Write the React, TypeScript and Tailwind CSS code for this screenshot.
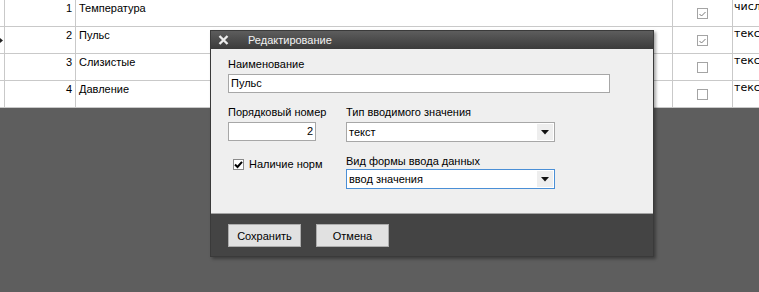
import React from "react";

type Row = {
  n: number;
  name: string;
  norm: boolean;
  type: string;
  current?: boolean;
};

const rows: Row[] = [
  { n: 1, name: "Температура", norm: true, type: "число" },
  { n: 2, name: "Пульс", norm: true, type: "текст", current: true },
  { n: 3, name: "Слизистые", norm: false, type: "текст" },
  { n: 4, name: "Давление", norm: false, type: "текст" },
];

function GridCheck({ checked }: { checked: boolean }) {
  return (
    <span className="flex h-[11px] w-[11px] items-center justify-center border border-[#a4a4a4] bg-white">
      {checked && (
        <svg width="9" height="9" viewBox="0 0 9 9">
          <path d="M1.5 5 L3.5 7 L7.5 3" fill="none" stroke="#7a7a7a" strokeWidth="1" />
        </svg>
      )}
    </span>
  );
}

function Combo({ value, focused }: { value: string; focused?: boolean }) {
  return (
    <div
      className={`flex h-[20px] w-[209px] items-center justify-between border bg-white pl-[2px] ${
        focused ? "border-[#4a8fd6]" : "border-[#a7a7a7]"
      }`}
    >
      <span className="leading-[14px]">{value}</span>
      <span className="m-px flex h-[16px] w-[16px] items-center justify-center bg-[#eeeeee]">
        <svg width="8" height="5" viewBox="0 0 8 5">
          <polygon points="0,0 8,0 4,4.5" fill="#111" />
        </svg>
      </span>
    </div>
  );
}

export default function App() {
  return (
    <div className="relative h-[292px] w-[759px] overflow-hidden bg-[#5e5e5e] font-['Liberation_Sans',Arial,sans-serif] text-[11px] text-black">
      {/* grid */}
      <div className="bg-white">
        {rows.map((row) => (
          <div key={row.n} className="flex h-[27px] border-b border-[#c9c9c9]">
            <div className="relative w-[5px] border-r border-[#c9c9c9]">
              {row.current && (
                <svg className="absolute left-0 top-[11px]" width="3" height="5" viewBox="0 0 3 5">
                  <polygon points="0,0 3,2.5 0,5" fill="#222" />
                </svg>
              )}
            </div>
            <div className="w-[71px] border-r border-[#c9c9c9] pr-[3px] pt-[1px] text-right leading-[14px]">
              {row.n}
            </div>
            <div className="w-[597px] border-r border-[#c9c9c9] pl-[3px] pt-[1px] leading-[14px]">
              {row.name}
            </div>
            <div className="flex w-[60px] items-center justify-center border-r border-[#c9c9c9] pt-[1px]">
              <GridCheck checked={row.norm} />
            </div>
            <div className="flex-1 overflow-hidden whitespace-nowrap pl-px font-['DejaVu_Sans',sans-serif] leading-[13px]">
              {row.type}
            </div>
          </div>
        ))}
      </div>

      {/* edit dialog */}
      <div className="absolute left-[210px] top-[30px] w-[444px] border border-[#3a3a3a] bg-[#444444] shadow-[2px_2px_3px_rgba(0,0,0,0.35)]">
        <div className="flex h-[18px] items-center bg-gradient-to-b from-[#5d5d5d] to-[#3b3b3b] text-[#f2f2f2]">
          <svg className="ml-[7px]" width="11" height="10" viewBox="0 0 11 10">
            <path d="M1.5 1 L9.5 9 M9.5 1 L1.5 9" stroke="#ececec" strokeWidth="2.4" />
          </svg>
          <span className="ml-[19px] leading-[14px]">Редактирование</span>
        </div>

        <div className="h-[165px] border-b border-[#a3a3a3] bg-[#efefef] pl-[17px] pt-[8px]">
          <div className="leading-[14px]">Наименование</div>
          <div className="mt-[3px] flex h-[19px] w-[382px] items-center border border-[#a7a7a7] bg-white pl-[2px]">
            Пульс
          </div>

          <div className="mt-[12px] flex">
            <div className="w-[118px]">
              <div className="leading-[14px]">Порядковый номер</div>
              <div className="mt-[3px] flex h-[19px] w-[88px] items-center justify-end border border-[#a7a7a7] bg-white pr-[2px]">
                2
              </div>
              <label className="ml-[5px] mt-[16px] flex h-[14px] items-center gap-[5px]">
                <span className="flex h-[11px] w-[11px] items-center justify-center border border-[#8a8a8a] bg-white">
                  <svg width="9" height="9" viewBox="0 0 9 9">
                    <path d="M1 4.5 L3.5 7 L8 1.8" fill="none" stroke="#000" strokeWidth="2" />
                  </svg>
                </span>
                <span className="leading-[14px]">Наличие норм</span>
              </label>
            </div>
            <div className="w-[209px]">
              <div className="leading-[14px]">Тип вводимого значения</div>
              <div className="mt-[3px]">
                <Combo value="текст" />
              </div>
              <div className="mt-[12px] leading-[14px]">Вид формы ввода данных</div>
              <div className="mt-[1px]">
                <Combo value="ввод значения" focused />
              </div>
            </div>
          </div>
        </div>

        <div className="flex h-[42px] gap-[15px] pl-[17px] pt-[10px]">
          <button
            type="button"
            className="h-[23px] w-[73px] border border-[#adadad] bg-[#e1e1e1] text-[11px] leading-[14px] text-black"
          >
            Сохранить
          </button>
          <button
            type="button"
            className="h-[23px] w-[73px] border border-[#adadad] bg-[#e1e1e1] text-[11px] leading-[14px] text-black"
          >
            Отмена
          </button>
        </div>
      </div>
    </div>
  );
}
